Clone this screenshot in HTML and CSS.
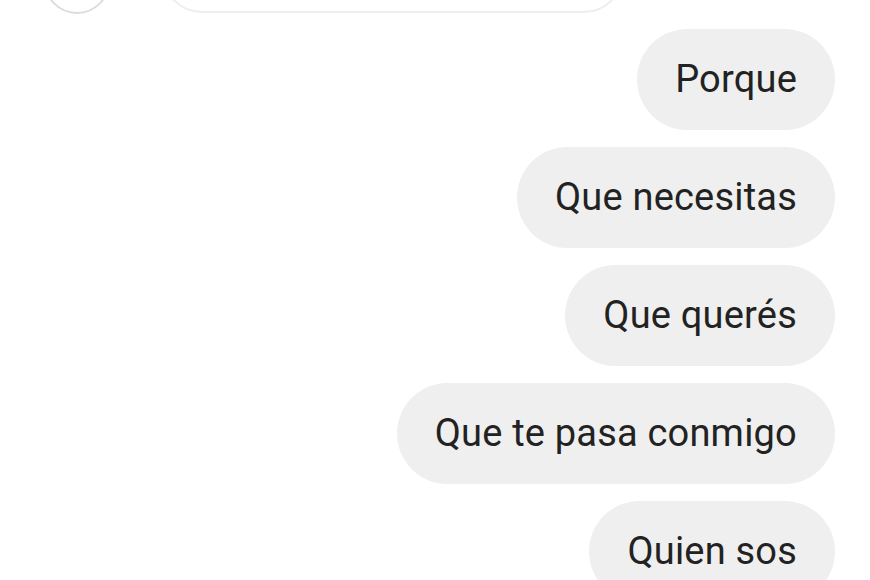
FILE: index.html
```html
<!DOCTYPE html>
<html>
<head>
<meta charset="utf-8">
<link rel="stylesheet" href="styles.css">
</head>
<body>
<div class="chat">
  <div class="incoming">
    <div class="avatar"></div>
    <div class="in-bubble"></div>
  </div>
  <div class="outgoing">
    <div class="bubble">Porque</div>
    <div class="bubble">Que necesitas</div>
    <div class="bubble">Que querés</div>
    <div class="bubble">Que te pasa conmigo</div>
    <div class="bubble">Quien sos</div>
  </div>
</div>
</body>
</html>
```
FILE: styles.css
```css
html, body {
  margin: 0;
  padding: 0;
  background: #ffffff;
  overflow: hidden;
}
.chat {
  width: 870px;
  height: 580px;
  overflow: hidden;
  font-family: Roboto, "Noto Sans", sans-serif;
}
.incoming {
  display: flex;
  align-items: flex-end;
  margin-top: -60px;
  height: 74px;
  padding-left: 44px;
}
.avatar {
  width: 62px;
  height: 62px;
  border: 2px solid #dcdcdc;
  border-radius: 50%;
  flex: none;
}
.in-bubble {
  width: 458px;
  height: 80px;
  margin-left: 52px;
  margin-bottom: 1px;
  border: 2px solid #eeeeee;
  border-radius: 40px;
  flex: none;
}
.outgoing {
  display: flex;
  flex-direction: column;
  align-items: flex-end;
  gap: 17px;
  padding-right: 35px;
  margin-top: 15px;
}
.bubble {
  background: #efefef;
  color: #222222;
  font-size: 38px;
  letter-spacing: 0.2px;
  height: 101px;
  line-height: 101px;
  padding: 0 38px;
  border-radius: 51px;
  white-space: nowrap;
}
```
